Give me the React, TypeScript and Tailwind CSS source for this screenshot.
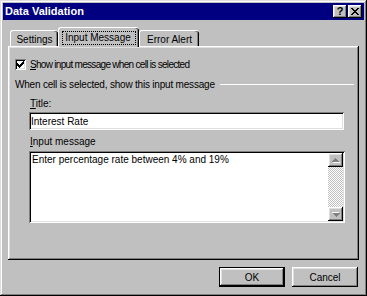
import React from "react";

/* win95 bevels */
const RAISED =
  "shadow-[inset_-1px_-1px_#000,inset_1px_1px_#fff,inset_-2px_-2px_#808080,inset_2px_2px_#dfdfdf]";
const SUNKEN =
  "shadow-[inset_1px_1px_#808080,inset_-1px_-1px_#fff,inset_2px_2px_#000,inset_-2px_-2px_#dfdfdf]";

function CaptionButton({ children }: { children: React.ReactNode }) {
  return (
    <div className={`w-[14px] h-[13px] bg-[#c0c0c0] flex items-center justify-center ${RAISED}`}>
      {children}
    </div>
  );
}

function Tab({ label, active, className }: { label: string; active?: boolean; className: string }) {
  if (active) {
    return (
      <div
        className={`relative z-10 -mb-px h-[20px] flex justify-center pt-[3px] bg-[#c0c0c0] border-l border-t border-white rounded-t-[3px] shadow-[inset_-1px_0_#000,inset_-2px_0_#808080] ${className}`}
      >
        <span className="h-[14px] leading-[14px] pl-[3px] pr-[5px] outline outline-1 outline-dotted outline-black -outline-offset-1">
          {label}
        </span>
      </div>
    );
  }
  return (
    <div
      className={`h-[16px] flex justify-center pt-[2px] bg-[#c0c0c0] border-l border-t border-white rounded-t-[3px] shadow-[inset_-1px_0_#000,inset_-2px_0_#808080] ${className}`}
    >
      <span>{label}</span>
    </div>
  );
}

function Checkbox() {
  return (
    <div className={`w-[11px] h-[11px] bg-white flex items-center justify-center ${SUNKEN}`}>
      <svg width="7" height="7" viewBox="0 0 7 7" shapeRendering="crispEdges">
        <path d="M0 2h1v1h1v1h1v-1h1v-1h1v-1h1v-1h1v3h-1v1h-1v1h-1v1h-1v1h-1v-1h-1v-1h-1z" fill="#000" />
      </svg>
    </div>
  );
}

function ArrowButton({ down }: { down?: boolean }) {
  return (
    <div className={`w-[15px] h-[14px] bg-[#c0c0c0] flex items-center justify-center ${RAISED}`}>
      <svg width="8" height="5" viewBox="0 0 8 5" shapeRendering="crispEdges" className={down ? "rotate-180" : ""}>
        <path d="M4 1h1v1h1v1h1v1h1v1h-7v-1h1v-1h1v-1h1z" fill="#fff" />
        <path d="M3 0h1v1h1v1h1v1h1v1h-7v-1h1v-1h1v-1h1z" fill="#808080" />
      </svg>
    </div>
  );
}

function Button({ label, isDefault }: { label: string; isDefault?: boolean }) {
  if (isDefault) {
    return (
      <div className="w-[66px] h-[20px] border border-black flex">
        <div className={`flex-1 flex items-center justify-center bg-[#c0c0c0] ${RAISED}`}>{label}</div>
      </div>
    );
  }
  return (
    <div className={`w-[66px] h-[20px] flex items-center justify-center bg-[#c0c0c0] ${RAISED}`}>{label}</div>
  );
}

export default function App() {
  return (
    <div className="w-[367px] h-[296px] bg-[#c0c0c0] p-[3px] flex flex-col font-['Liberation_Sans',Arial,sans-serif] text-[10px] leading-[13px] text-black select-none shadow-[inset_-1px_-1px_#000,inset_1px_1px_#dfdfdf,inset_-2px_-2px_#808080,inset_2px_2px_#fff]">
      {/* ── Caption ── */}
      <div className="h-[17px] bg-[#000080] flex items-center justify-between pl-[2px] pr-[2px]">
        <span className="text-white font-bold text-[11px] leading-[17px]">Data Validation</span>
        <div className="flex gap-[1px]">
          <CaptionButton>
            <span className="font-bold text-[11px] leading-none">?</span>
          </CaptionButton>
          <CaptionButton>
            <svg width="8" height="7" viewBox="0 0 8 7" shapeRendering="crispEdges">
              <path d="M0 0h2v1h1v1h2v-1h1v-1h2v1h-1v1h-1v1h-1v1h1v1h1v1h1v1h-2v-1h-1v-1h-2v1h-1v1h-2v-1h1v-1h1v-1h1v-1h-1v-1h-1v-1h-1z" fill="#000" />
            </svg>
          </CaptionButton>
        </div>
      </div>

      {/* ── Tabs ── */}
      <div className="mt-[7px] ml-[7px] h-[19px] flex items-end">
        <Tab label="Settings" className="w-[48px]" />
        <Tab label="Input Message" active className="w-[81px]" />
        <Tab label="Error Alert" className="w-[60px]" />
      </div>

      {/* ── Panel ── */}
      <div className={`ml-[5px] w-[351px] h-[214px] flex flex-col pl-[7px] pt-[12px] pr-[5px] ${RAISED}`}>
        <div className="flex items-center h-[13px]">
          <Checkbox />
          <span className="ml-[4px] tracking-[-0.7px]">
            <span className="underline">S</span>how input message when cell is selected
          </span>
        </div>

        <div className="mt-[7px] flex items-center h-[13px]">
          <span className="tracking-[-0.2px]">When cell is selected, show this input message</span>
          <div className="flex-1 ml-[5px] h-px bg-white" />
        </div>

        <div className="mt-[6px] ml-[14px] pl-[1px]">
          <span className="underline">T</span>itle:
        </div>
        <div className={`mt-[2px] ml-[14px] w-[315px] h-[18px] bg-white flex items-center pl-[2px] ${SUNKEN}`}>
          Interest Rate
        </div>

        <div className="mt-[5px] ml-[14px] pl-[1px]">
          <span className="underline">I</span>nput message
        </div>
        <div className={`mt-[3px] ml-[14px] w-[316px] h-[72px] bg-white flex p-[2px] ${SUNKEN}`}>
          <div className="flex-1 pl-[1px]">Enter percentage rate between 4% and 19%</div>
          <div className="w-[15px] flex flex-col">
            <ArrowButton />
            <div className="flex-1 bg-[repeating-conic-gradient(#c0c0c0_0_25%,#fff_0_50%)] bg-[length:2px_2px]" />
            <ArrowButton down />
          </div>
        </div>
      </div>

      {/* ── Buttons ── */}
      <div className="mt-[7px] mr-[6px] flex justify-end gap-[7px]">
        <Button label="OK" isDefault />
        <Button label="Cancel" />
      </div>
    </div>
  );
}
